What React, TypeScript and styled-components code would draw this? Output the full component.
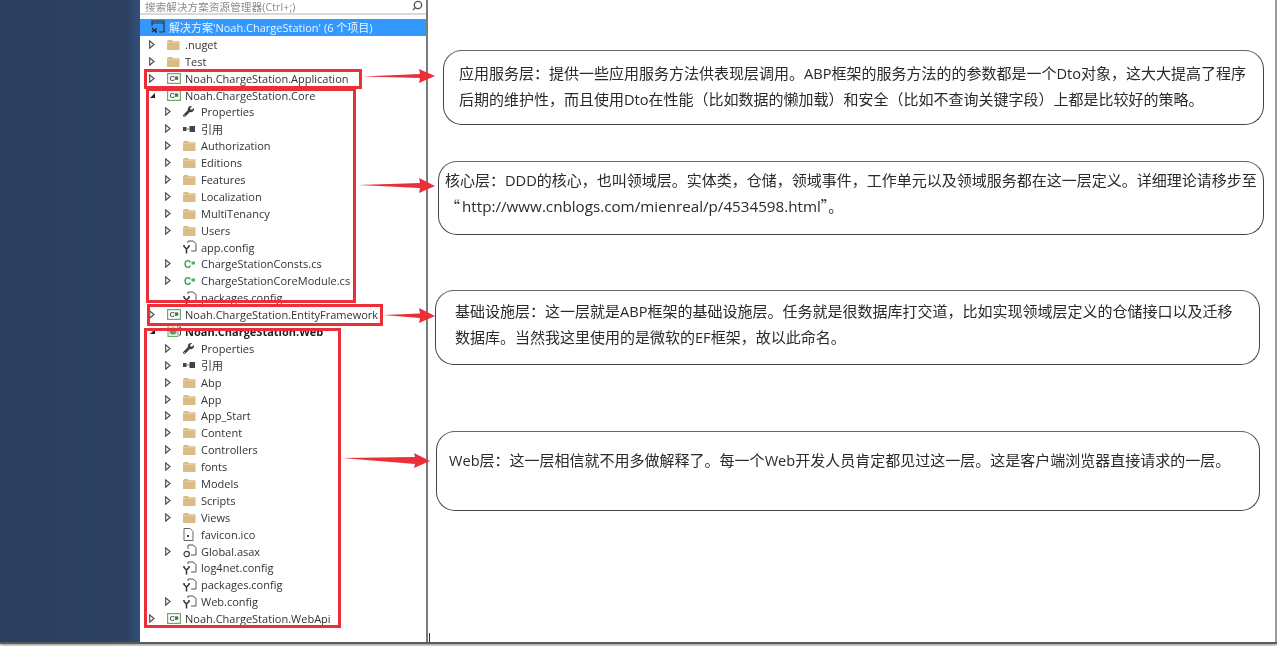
import React from "react";
import styled, { createGlobalStyle } from "styled-components";
import { FaWrench } from "react-icons/fa";
import { Search } from "lucide-react";

const Global = createGlobalStyle`
  html, body { margin: 0; padding: 0; background: #fff; overflow: hidden; }
`;

const Page = styled.div`
  position: relative;
  width: 1277px;
  height: 646px;
  overflow: hidden;
  background: #fff;
  filter: blur(0.35px);
`;
const Shot = styled.div`
  display: flex;
  width: 1277px;
  height: 642px;
  border-bottom: 2px solid #5a5a5a;
  box-shadow: 0 2px 3px rgba(0, 0, 0, 0.35);
  box-sizing: content-box;
`;
const Desktop = styled.div`
  width: 140px;
  flex: none;
  background: linear-gradient(90deg, #2b3e5e 0%, #2d4162 90%, #33507a 100%);
`;
const Explorer = styled.div`
  width: 286px;
  flex: none;
  display: flex;
  flex-direction: column;
  background: #fff;
  border-right: 2px solid #7b7b7b;
  font-family: "Open Sans", "Noto Sans CJK SC", sans-serif;
  font-size: 11px;
  color: #333;
`;
const SearchBar = styled.div`
  height: 15px;
  flex: none;
  display: flex;
  align-items: flex-start;
  justify-content: space-between;
  padding: 0 3px 0 5px;
  margin-bottom: 4px;
  box-sizing: border-box;
  border-bottom: 2px solid #d5d9de;
  color: #8a8a8a;
  font-size: 10.5px;
  line-height: 15px;
  letter-spacing: 0.15px;
  white-space: nowrap;
`;
const SearchGlyph = styled(Search)`
  transform: scaleX(-1);
`;
const SolutionRow = styled.div`
  height: 16.9px;
  flex: none;
  display: flex;
  align-items: center;
  padding-left: 11px;
  background: #3399ff;
  color: #eaf4ff;
  white-space: nowrap;
`;
const Row = styled.div<{ $depth: number }>`
  height: 16.9px;
  flex: none;
  display: flex;
  align-items: center;
  padding-left: ${(p) => 8 + p.$depth * 16}px;
  white-space: nowrap;
`;
const Expander = styled.span`
  width: 18px;
  margin-left: 1px;
  flex: none;
  display: flex;
  align-items: center;
`;
const IconSlot = styled.span`
  width: 18px;
  height: 14px;
  flex: none;
  display: flex;
  align-items: center;
  color: #3c3c3c;
`;
const Label = styled.span<{ $bold?: boolean }>`
  font-weight: ${(p) => (p.$bold ? 700 : 400)};
  color: ${(p) => (p.$bold ? "#222" : "inherit")};
`;
const Notes = styled.div`
  flex: 1;
  min-width: 0;
  display: flex;
  flex-direction: column;
  border-right: 2px solid #9a9a9a;
  font-family: "Noto Sans CJK SC", sans-serif;
  font-size: 15px;
  line-height: 26px;
  color: #2a2a2a;
`;
const Latin = styled.span`
  font-family: "Open Sans", "Noto Sans CJK SC", sans-serif;
  font-size: 14.6px;
  line-height: 20px;
`;
const Url = styled(Latin)`
  font-size: 15.2px;
  margin-left: 2px;
`;
const Bubble = styled.div<{ $gap: number; $left: number; $width: number; $height: number; $padX: number; $padY: number }>`
  flex: none;
  box-sizing: border-box;
  margin-top: ${(p) => p.$gap}px;
  margin-left: ${(p) => p.$left}px;
  width: ${(p) => p.$width}px;
  height: ${(p) => p.$height}px;
  padding: ${(p) => p.$padY}px 0 0 ${(p) => p.$padX}px;
  border: 1.5px solid #444;
  border-top-color: #666;
  border-radius: 19px;
  white-space: nowrap;
`;
const Mark = styled.div<{ $x: number; $y: number; $w: number; $h: number }>`
  position: absolute;
  left: ${(p) => p.$x}px;
  top: ${(p) => p.$y}px;
  width: ${(p) => p.$w}px;
  height: ${(p) => p.$h}px;
  box-sizing: border-box;
  border: 3px solid #ea2f38;
`;
const ArrowLayer = styled.svg`
  position: absolute;
  left: 0;
  top: 0;
  width: 1277px;
  height: 646px;
`;
const Tick = styled.div`
  position: absolute;
  left: 429px;
  top: 633px;
  width: 1px;
  height: 9px;
  background: #333;
`;

const Closed = () => (
  <svg width="6" height="9" viewBox="0 0 6 9"><path d="M.7.8 5 4.5.7 8.2z" fill="#fff" stroke="#444" strokeWidth="1.1" /></svg>
);
const Open = () => (
  <svg width="7" height="7" viewBox="0 0 7 7"><path d="M6 1v5H1z" fill="#222" /></svg>
);
const Folder = () => (
  <svg width="13" height="11" viewBox="0 0 13 11"><path d="M0 2.2 1 1h4l1 1.2h6.5V11H0z" fill="#dcbc85" /><path d="M0 3h12.5v.8H0z" fill="#e8d0a4" /></svg>
);
const Project = () => (
  <svg width="14" height="11" viewBox="0 0 14 11">
    <rect x=".6" y=".6" width="12.8" height="9.8" fill="#fff" stroke="#6ba96f" strokeWidth="1.2" />
    <text x="2.4" y="8" fontFamily="Liberation Sans, sans-serif" fontSize="7.5" fontWeight="700" fill="#4b5a4b">C</text>
    <rect x="8" y="3.4" width="3.2" height="3.4" fill="#5c6a5c" />
  </svg>
);
const CsFile = () => (
  <svg width="14" height="10" viewBox="0 0 14 10">
    <text x="1" y="8.5" fontFamily="Liberation Sans, sans-serif" fontSize="10" fontWeight="700" fill="#3fa04a">C</text>
    <rect x="8.5" y="2.5" width="3.5" height="3" fill="#5aa864" />
  </svg>
);
const Refs = () => (
  <svg width="13" height="8" viewBox="0 0 13 8"><rect x="0" y="2" width="3.5" height="4" fill="#444" /><rect x="3.5" y="3.5" width="3" height="1" fill="#777" /><rect x="6.5" y="1" width="5.5" height="6" fill="#444" /></svg>
);
const Config = () => (
  <svg width="14" height="14" viewBox="0 0 14 14" fill="none">
    <path d="M5 3V1h5l3 2.5V11H8" stroke="#555" strokeWidth="1" />
    <path d="M1 5v1.5L3.5 9 6 6.5V5M3.5 9v4.5" stroke="#333" strokeWidth="1.5" />
  </svg>
);
const IcoFile = () => (
  <svg width="11" height="13" viewBox="0 0 11 13" fill="none"><path d="M1 .5h6l3 3v9H1z" stroke="#666" /><rect x="4" y="7" width="2" height="2" fill="#444" /></svg>
);
const Asax = () => (
  <svg width="14" height="14" viewBox="0 0 14 14" fill="none">
    <path d="M5 5V1h5l3 2.5V11H8" stroke="#555" />
    <circle cx="3.7" cy="10" r="2.7" stroke="#444" strokeWidth="1.2" />
  </svg>
);
const WebProject = () => (
  <svg width="14" height="12" viewBox="0 0 14 12" fill="none">
    <rect x="1" y=".5" width="10" height="11" fill="#dfeee0" stroke="#6ba96f" />
    <circle cx="6" cy="6" r="3.5" fill="#5b9a63" />
    <path d="M12 2h1.5v8H12" stroke="#444" />
  </svg>
);
const SolutionIcon = () => (
  <svg width="14" height="14" viewBox="0 0 14 14" fill="none">
    <path d="M1 6V1h12v11H8" stroke="#333" strokeWidth="1.2" />
    <path d="M1 3h12" stroke="#333" />
    <path d="M1 8l4 4M5 8v5M1 12l2-2" stroke="#223" strokeWidth="1.2" />
  </svg>
);

type Kind = "folder" | "project" | "web" | "cs" | "refs" | "config" | "ico" | "asax" | "wrench";
const icons: Record<Kind, React.ReactNode> = {
  folder: <Folder />,
  project: <Project />,
  web: <WebProject />,
  cs: <CsFile />,
  refs: <Refs />,
  config: <Config />,
  ico: <IcoFile />,
  asax: <Asax />,
  wrench: <FaWrench size={11} />,
};
type Item = [number, "c" | "o" | "", Kind, string, boolean?];
const tree: Item[] = [
  [0, "c", "folder", ".nuget"],
  [0, "c", "folder", "Test"],
  [0, "c", "project", "Noah.ChargeStation.Application"],
  [0, "o", "project", "Noah.ChargeStation.Core"],
  [1, "c", "wrench", "Properties"],
  [1, "c", "refs", "引用"],
  [1, "c", "folder", "Authorization"],
  [1, "c", "folder", "Editions"],
  [1, "c", "folder", "Features"],
  [1, "c", "folder", "Localization"],
  [1, "c", "folder", "MultiTenancy"],
  [1, "c", "folder", "Users"],
  [1, "", "config", "app.config"],
  [1, "c", "cs", "ChargeStationConsts.cs"],
  [1, "c", "cs", "ChargeStationCoreModule.cs"],
  [1, "", "config", "packages.config"],
  [0, "c", "project", "Noah.ChargeStation.EntityFramework"],
  [0, "o", "web", "Noah.ChargeStation.Web", true],
  [1, "c", "wrench", "Properties"],
  [1, "c", "refs", "引用"],
  [1, "c", "folder", "Abp"],
  [1, "c", "folder", "App"],
  [1, "c", "folder", "App_Start"],
  [1, "c", "folder", "Content"],
  [1, "c", "folder", "Controllers"],
  [1, "c", "folder", "fonts"],
  [1, "c", "folder", "Models"],
  [1, "c", "folder", "Scripts"],
  [1, "c", "folder", "Views"],
  [1, "", "ico", "favicon.ico"],
  [1, "c", "asax", "Global.asax"],
  [1, "", "config", "log4net.config"],
  [1, "", "config", "packages.config"],
  [1, "c", "config", "Web.config"],
  [0, "c", "project", "Noah.ChargeStation.WebApi"],
];

const arrows = [
  "362,76.5 420,74 419,69 435,76 419,83 420,78",
  "358,185 420,183 419,178 435,186 419,193 420,188",
  "383,315 420,313.5 419,308 435,316 419,323 420,318",
  "342,458 415,457 414,453 430,461 414,468 415,464",
];

export default function App() {
  return (
    <Page>
      <Global />
      <Shot>
        <Desktop />
        <Explorer>
          <SearchBar>
            <span>搜索解决方案资源管理器(Ctrl+;)</span>
            <SearchGlyph size={11} color="#555" strokeWidth={3} />
          </SearchBar>
          <SolutionRow>
            <IconSlot><SolutionIcon /></IconSlot>
            <span>解决方案'Noah.ChargeStation' (6 个项目)</span>
          </SolutionRow>
          {tree.map(([depth, state, kind, label, bold], i) => (
            <Row key={i} $depth={depth}>
              <Expander>{state === "c" ? <Closed /> : state === "o" ? <Open /> : null}</Expander>
              <IconSlot>{icons[kind]}</IconSlot>
              <Label $bold={bold}>{label}</Label>
            </Row>
          ))}
        </Explorer>
        <Notes>
          <Bubble $gap={50} $left={15} $width={821} $height={75} $padX={15} $padY={9}>
            应用服务层：提供一些应用服务方法供表现层调用。<Latin>ABP</Latin>框架的服务方法的的参数都是一个<Latin>Dto</Latin>对象，这大大提高了程序
            <br />
            后期的维护性，而且使用<Latin>Dto</Latin>在性能（比如数据的懒加载）和安全（比如不查询关键字段）上都是比较好的策略。
          </Bubble>
          <Bubble $gap={36} $left={10} $width={826} $height={74} $padX={6} $padY={5}>
            核心层：<Latin>DDD</Latin>的核心，也叫领域层。实体类，仓储，领域事件，工作单元以及领域服务都在这一层定义。详细理论请移步至
            <br />
            “<Url>http://www.cnblogs.com/mienreal/p/4534598.html</Url>”。
          </Bubble>
          <Bubble $gap={55} $left={7} $width={825} $height={75} $padX={19} $padY={7}>
            基础设施层：这一层就是<Latin>ABP</Latin>框架的基础设施层。任务就是很数据库打交道，比如实现领域层定义的仓储接口以及迁移
            <br />
            数据库。当然我这里使用的是微软的<Latin>EF</Latin>框架，故以此命名。
          </Bubble>
          <Bubble $gap={66} $left={8} $width={824} $height={80} $padX={12} $padY={15}>
            <Latin>Web</Latin>层：这一层相信就不用多做解释了。每一个<Latin>Web</Latin>开发人员肯定都见过这一层。这是客户端浏览器直接请求的一层。
          </Bubble>
        </Notes>
      </Shot>
      <Mark $x={144} $y={69} $w={218} $h={20} />
      <Mark $x={146} $y={88} $w={210} $h={215} />
      <Mark $x={147} $y={304} $w={236} $h={22} />
      <Mark $x={144} $y={328} $w={197} $h={300} />
      <ArrowLayer viewBox="0 0 1277 646">
        {arrows.map((points) => (
          <polygon key={points} points={points} fill="#ea2f38" />
        ))}
      </ArrowLayer>
      <Tick />
    </Page>
  );
}
